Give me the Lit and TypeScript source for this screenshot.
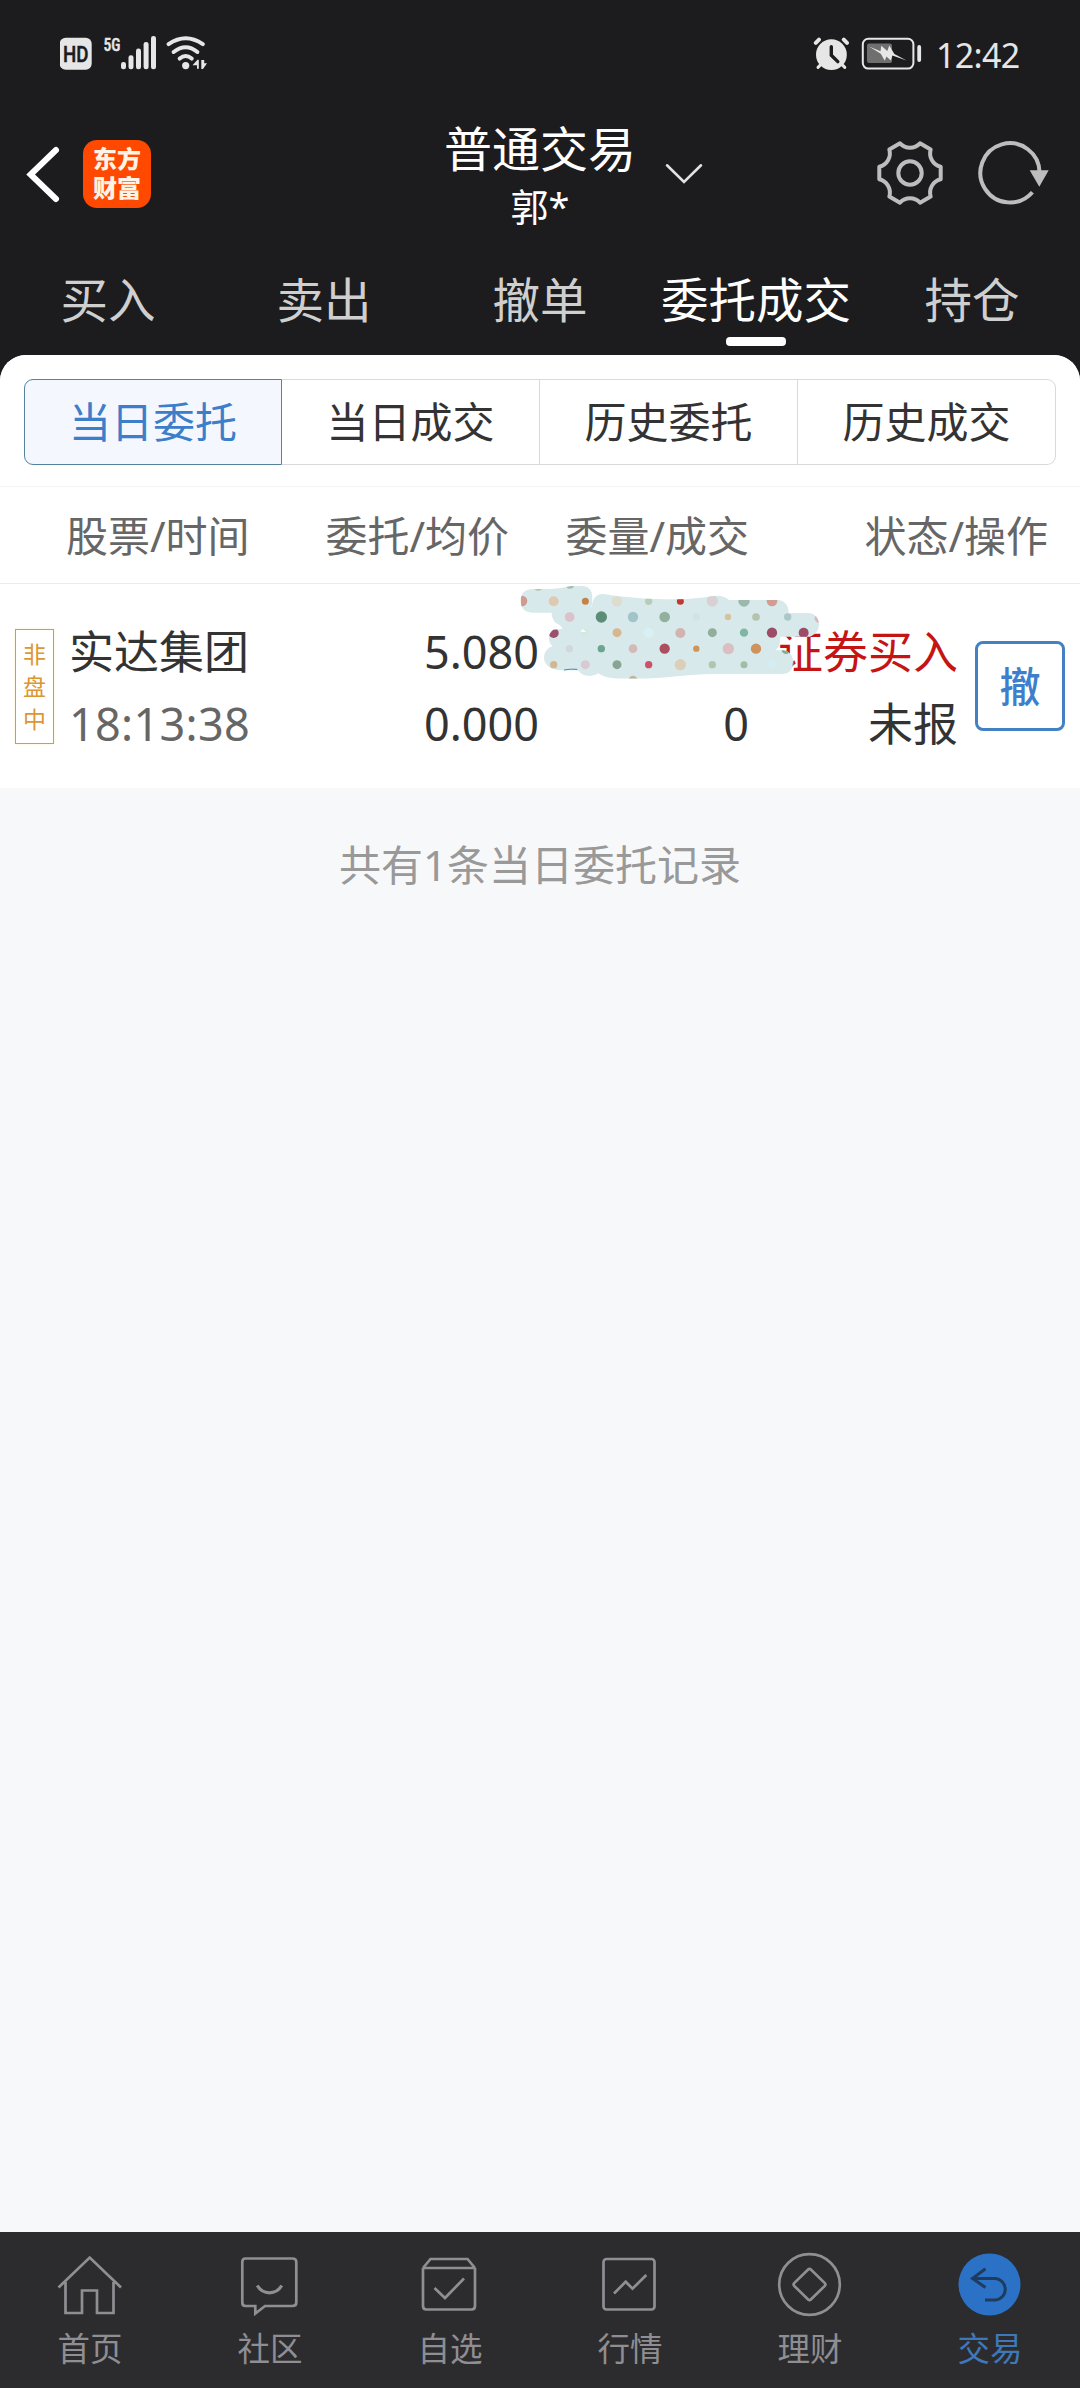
import { LitElement, html, css, svg } from "lit";
import { customElement, state } from "lit/decorators.js";
import { classMap } from "lit/directives/class-map.js";

const FONT = css`"Noto Sans", "Noto Sans CJK SC", sans-serif`;

@customElement("status-bar")
class StatusBar extends LitElement {
  static styles = css`
    :host { display: flex; height: 108px; align-items: center; justify-content: space-between; padding: 0 60px; box-sizing: border-box; color: #e6e6e6; font-family: ${FONT}; }
    svg { display: block; }
    .right { display: flex; align-items: center; }
    .time { font-size: 34px; line-height: 40px; margin-left: 13px; width: 84px; padding-top: 1px; white-space: nowrap; letter-spacing: -0.7px; }
    .hd { font: 500 22px Roboto, sans-serif; fill: #1c1c1e; }
    .net { font: 500 19px "Roboto Condensed", Roboto, sans-serif; fill: #e6e6e6; }
  `;
  render() {
    return html`
      <svg width="150" height="40" viewBox="60 34 150 40" fill="#e6e6e6">
        <rect x="59.7" y="37.7" width="32" height="32" rx="6" />
        <text class="hd" x="63" y="61.5" textLength="25.5" lengthAdjust="spacingAndGlyphs" stroke="#1c1c1e" stroke-width=".5">HD</text>
        <text class="net" x="103.5" y="50.8" textLength="17" lengthAdjust="spacingAndGlyphs" stroke="#e6e6e6" stroke-width=".4">5G</text>
        ${[[121, 62], [128.5, 55.3], [136, 48.6], [143.6, 42], [151, 36]].map(
          ([x, y]) => svg`<rect x=${x} y=${y} width="5" height=${69.2 - y} rx="2.3" />`
        )}
        <g fill="none" stroke="#e6e6e6" stroke-width="4" stroke-linecap="round">
          <path d="M168.6 44.2Q185.7 32.3 202.8 44.2" />
          <path d="M173.6 52Q185.7 42.5 197.4 52" />
          <path d="M179.7 58.6Q185.7 53.4 191.7 58.6" />
        </g>
        <circle cx="185.7" cy="65.6" r="3.6" />
        <path d="M192.5 65.3L197.5 59.8H198.8V68.8H197V65.3Z M201.3 60V69H203L207 63.2H204.2V60Z" />
      </svg>
      <div class="right">
        <svg width="110" height="40" viewBox="814 34 110 40" fill="#e6e6e6">
          <g stroke="#e6e6e6" stroke-width="4" stroke-linecap="round">
            <path d="M816.8 42.8L820 39.6M848 42.8L844.8 39.6" />
            <path d="M819 67.4L823 63.4M845.8 67.4L841.8 63.4" stroke-width="3" />
          </g>
          <circle cx="832.4" cy="54.7" r="15.4" />
          <path d="M832.3 46.8V55.2L838.8 61.6" fill="none" stroke="#1c1c1e" stroke-width="3.4" stroke-linecap="round" />
          <rect x="863.8" y="38.8" width="50.6" height="29.8" rx="5.5" fill="none" stroke="#e6e6e6" stroke-width="2" />
          <rect x="868" y="43.5" width="25" height="19.5" rx="2" fill="#6f6f70" />
          <rect x="918.3" y="45" width="3.8" height="17" rx="1.9" />
          <path d="M870 46.4L881.5 51.3L882.3 45.8L888.3 51L890.3 45.4L895.4 54L907.5 60.6L893.4 55.4L891.8 60.4L887.4 56.6L885.8 60.8L881.8 53.8Z" />
        </svg>
        <div class="time">12:42</div>
      </div>
    `;
  }
}

@customElement("title-bar")
class TitleBar extends LitElement {
  static styles = css`
    :host { display: grid; grid-template-columns: 1fr auto 1fr; height: 132px; color: #fff; font-family: ${FONT}; }
    svg { display: block; }
    .left { display: flex; align-items: center; padding-left: 24px; gap: 19px; }
    .logo { width: 68px; height: 68px; border-radius: 14px; background: #ff4800; display: flex; flex-direction: column; align-items: center; justify-content: center; font: 900 24px/29px "Liberation Sans", "Noto Sans CJK SC", sans-serif; box-sizing: border-box; color: #fff3e6; }
    .title { display: flex; flex-direction: column; align-items: center; padding-top: 10px; }
    .name { font-size: 48px; line-height: 61px; height: 61px; }
    .user { font-size: 38px; line-height: 54px; height: 54px; }
    .rest { display: flex; align-items: center; justify-content: space-between; padding-left: 28px; padding-right: 29px; }
    .icons { display: flex; gap: 33px; align-items: center; }
  `;
  render() {
    return html`
      <div class="left">
        <svg width="40" height="60" viewBox="24 143 40 60"><path d="M56 149L30.6 173.5L56 198" fill="none" stroke="#fff" stroke-width="6" stroke-linecap="round" /></svg>
        <div class="logo"><span>东方</span><span>财富</span></div>
      </div>
      <div class="title"><div class="name">普通交易</div><div class="user">郭*</div></div>
      <div class="rest">
        <svg width="40" height="24" viewBox="664 161 40 24"><path d="M667 164.3L684 181L701 164.3" fill="none" stroke="#e2e2e2" stroke-width="2.6" stroke-linecap="round" /></svg>
        <div class="icons">
          <svg width="68" height="68" viewBox="-34 -33 68 68" fill="none" stroke="#bdbdbd" stroke-width="4" stroke-linejoin="round">
            <path d="M30.7 -6.2V6.2A13.7 13.7 0 0 0 20.7 23.5L10 29.7A13.7 13.7 0 0 0 -10 29.7L-20.7 23.5A13.7 13.7 0 0 0 -30.7 6.2V-6.2A13.7 13.7 0 0 0 -20.7 -23.5L-10 -29.7A13.7 13.7 0 0 0 10 -29.7L20.7 -23.5A13.7 13.7 0 0 0 30.7 -6.2Z" />
            <circle r="11.7" />
          </svg>
          <svg width="74" height="68" viewBox="-33 -33 74 68">
            <path d="M22.4 19.2A29.6 29.6 0 1 1 29.6 0" fill="none" stroke="#bdbdbd" stroke-width="4" />
            <path d="M19.7 -2.7H38.7L29.3 13.7Z" fill="#bdbdbd" />
          </svg>
        </div>
      </div>
    `;
  }
}

const DOTS: [number, number, number, string][] = [
  [66, 123, 16, "#cf9a90"], [161, 124, 15, "#dfc9b0"], [256, 124, 10.5, "#c58247"], [351, 124, 16, "#dcdccf"],
  [446, 124, 11, "#b8cdb8"], [541, 124, 10.5, "#c4362f"], [637, 123, 17, "#d8d0d3"], [732, 123, 17, "#9cb8aa"],
  [816, 123, 16, "#d29c92"], [115, 80, 12, "#b5c5a5"], [210, 74, 12, "#a3bfa5"], [209, 171, 14.5, "#dcc0ca"], [304, 171, 17, "#5c8d76"],
  [399, 171, 15.5, "#a0c4c8"], [494, 171, 16, "#92b09c"], [589, 171, 11, "#d1e4e2"], [684, 171, 9.5, "#d6c29e"],
  [768, 171, 11.5, "#b4c3ab"], [863, 171, 11, "#aac8c5"], [957, 175, 13, "#dcb5c0"], [161, 219, 15, "#9c5069"],
  [256, 219, 13, "#d6e8e3"], [351, 218, 13.5, "#d6b78e"], [446, 219, 15, "#d8f0f4"], [541, 219, 15, "#d3b3b1"],
  [637, 218, 13.5, "#8fae9b"], [732, 218, 12.5, "#7fb5a5"], [816, 218, 15.5, "#9c4c67"], [911, 218, 15, "#9c4c67"],
  [208, 266, 11, "#d0d8da"], [304, 266, 11, "#6ba48f"], [399, 266, 13, "#d4b9b6"], [494, 266, 15.5, "#ab4f60"],
  [589, 266, 9.5, "#cc955a"], [685, 266, 17, "#dabec1"], [768, 266, 15.5, "#cf925a"], [858, 269, 13, "#86a99a"],
  [161, 314, 11, "#d1b890"], [256, 314, 13.5, "#d9c9d2"], [351, 314, 13.5, "#88a594"], [446, 314, 11, "#cf5068"],
  [541, 314, 17, "#dccfba"], [637, 314, 11, "#b0c6ae"], [732, 314, 10.5, "#a0bda9"], [816, 312, 12, "#d3eef2"],
  [885, 314, 9, "#a6c3b2"], [399, 360, 13, "#c3b69a"],
];

@customElement("order-row")
class OrderRow extends LitElement {
  static styles = css`
    :host { display: grid; position: relative; grid-template-columns: 39px 216px 269px 210px 209px 106px; padding: 0 15px; height: 204px; box-sizing: border-box; background: #fff; font-family: ${FONT}; font-size: 45px; line-height: 72px; color: #333; white-space: nowrap; }
    .tag { margin-top: 45px; height: 115px; box-sizing: border-box; border: 1px solid #c0a060; color: #dc9633; display: flex; flex-direction: column; align-items: center; justify-content: center; font-size: 23px; line-height: 32.5px; box-shadow: 0 0 2px #fdf0bd; }
    .cell { display: flex; flex-direction: column; padding-top: 32px; text-align: right; }
    .name { text-align: left; padding-left: 15px; }
    .time { color: #666; letter-spacing: 0.3px; }
    .buy { color: #c41414; }
    .cancel { margin: 57px 0 0 17px; width: 90px; height: 90px; box-sizing: border-box; border: 3px solid #4381c4; border-radius: 8px; color: #3d7fcd; display: flex; align-items: center; justify-content: center; font-size: 41px; line-height: 50px; font-weight: 500; }
    .mask { position: absolute; left: 500px; top: -24px; width: 340px; height: 120px; }
  `;
  render() {
    return html`
      <div class="tag"><span>非</span><span>盘</span><span>中</span></div>
      <div class="cell name"><span>实达集团</span><span class="time">18:13:38</span></div>
      <div class="cell"><span>5.080</span><span>0.000</span></div>
      <div class="cell"><span>&nbsp;</span><span>0</span></div>
      <div class="cell"><span class="buy">证券买入</span><span>未报</span></div>
      <div><div class="cancel">撤</div></div>
      <svg class="mask" viewBox="0 0 1020 360">
        <defs>
          <clipPath id="blob">
            <path d="M62 123C62 100 75 87 100 87C150 88 175 86 215 78H250C268 80 278 94 277 112L275 140H268L276 141C276 115 290 101 310 102C350 108 420 117 500 118C560 118 600 115 640 108C665 106 677 112 687 120H835C855 122 866 137 866 159H925C945 160 957 175 957 193C957 212 945 225 930 230H841C841 250 838 262 825 271H850C868 273 880 288 880 307C880 327 868 341 850 342H640C560 343 520 352 440 356H360C325 356 305 348 295 340C270 354 245 347 236 332C210 329 190 332 172 330C145 325 132 310 132 293C132 275 145 262 158 259C142 245 143 220 160 209L187 207C186 200 180 197 175 193C160 185 155 172 155 158H100C75 158 62 145 62 123Z" />
          </clipPath>
        </defs>
        <g clip-path="url(#blob)">
          <rect width="1020" height="360" fill="#d8e9eb" />
          ${DOTS.map(([x, y, r, c]) => svg`<circle cx=${x} cy=${y} r=${r} fill=${c} />`)}
          <path d="M241 215L249 207L258 216Z" fill="#fff" />
        </g>
        <path d="M192 330Q212 326 232 328" stroke="#3e83c8" stroke-width="3" fill="none" />
      </svg>
    `;
  }
}

const NAV = [
  { label: "首页", icon: svg`<path d="M58.5 2287.5L89.7 2257.5L121 2287.5M65.5 2282V2313H82V2290.5H97V2313H113.5V2282" />`, cx: 90 },
  { label: "社区", icon: svg`<path d="M245.5 2258.5H292.5Q296.3 2258.5 296.3 2262V2302.5Q296.3 2306 292.5 2306H265L255.3 2313.6V2306H245.5Q242.3 2306 242.3 2302.5V2262Q242.3 2258.5 245.5 2258.5Z" /><path d="M257.3 2285.5Q261.5 2292.8 269.5 2292.8T281.7 2285.5" stroke-width="3.2" />`, cx: 270 },
  { label: "自选", icon: svg`<path d="M423 2268V2306Q423 2309.5 426.5 2309.5H471.5Q475 2309.5 475 2306V2268M423 2268H475M423 2268L430.5 2259H467.5L475 2268M434.5 2288L445 2298L464 2278.5" />`, cx: 450 },
  { label: "行情", icon: svg`<rect x="603.5" y="2259" width="51" height="50.5" rx="3" /><path d="M614 2293.5L625.7 2281.7L632.5 2288.7L646.3 2275" />`, cx: 630 },
  { label: "理财", icon: svg`<circle cx="809.5" cy="2284.5" r="30.3" /><path d="M807.9 2269.7Q809.5 2268.2 811.1 2269.7L824.6 2282.9Q826.2 2284.5 824.6 2286.1L811.1 2299.3Q809.5 2300.8 807.9 2299.3L794.4 2286.1Q792.8 2284.5 794.4 2282.9Z" />`, cx: 810 },
  { label: "交易", icon: svg`<circle cx="989.5" cy="2284.5" r="31" fill="#2b72c6" stroke="none" /><path d="M985.5 2268.8L972.5 2278.5L985.5 2287.5M972.5 2278.5H995.5A10.8 10.8 0 0 1 995.5 2300H985" stroke="#1f3c60" stroke-width="3" />`, cx: 990 },
];

@customElement("bottom-nav")
class BottomNav extends LitElement {
  static styles = css`
    :host { display: grid; grid-template-columns: repeat(6, 1fr); height: 156px; background: #2c2c2e; font-family: ${FONT}; }
    .item { display: flex; flex-direction: column; align-items: center; padding-top: 16px; color: #8e8e93; font-size: 32.5px; line-height: 40px; }
    .item span { margin-top: 9px; }
    .active { color: #3f78b8; }
    svg { display: block; fill: none; stroke: #8e8e93; stroke-width: 2.7; }
  `;
  render() {
    return NAV.map(
      (n, i) => html`<div class=${classMap({ item: true, active: i === 5 })}>
        <svg width="72" height="72" viewBox="${n.cx - 36} 2248 72 72">${n.icon}</svg>
        <span>${n.label}</span>
      </div>`
    );
  }
}

@customElement("app-root")
class AppRoot extends LitElement {
  @state() private tab = 3;
  @state() private segment = 0;

  static styles = css`
    :host { display: flex; flex-direction: column; width: 1080px; height: 2388px; background: #1c1c1e; font-family: ${FONT}; overflow: hidden; }
    .tabs { display: grid; grid-template-columns: repeat(5, 1fr); height: 115px; color: #cfcfcf; font-size: 47.5px; line-height: 60px; }
    .tab { display: flex; flex-direction: column; align-items: center; padding-top: 29.5px; white-space: nowrap; box-sizing: border-box; }
    .tab.on { color: #fff; }
    .tab.on::after { content: ""; width: 60px; height: 9px; border-radius: 4px; background: #fff; margin-top: 7.5px; }
    .sheet { flex: 1; background: #f7f8fa; border-radius: 26px 26px 0 0; overflow: hidden; display: flex; flex-direction: column; }
    .segwrap { background: #fff; padding: 24px 24px 23px; border-bottom: 1px solid #f3f4f5; }
    .segs { display: grid; grid-template-columns: repeat(4, 1fr); height: 84px; font-size: 42px; line-height: 84px; color: #333; }
    .seg { box-sizing: border-box; border: 1px solid #d8d9da; border-left-width: 0; text-align: center; line-height: 84px; }
    .seg:first-child { border-radius: 9px 0 0 9px; }
    .seg:last-child { border-radius: 0 9px 9px 0; }
    .seg.on { border: 1px solid #55829d; background: #f4f8fe; color: #3d7ecb; }
    .heads { display: grid; grid-template-columns: 184px 259px 240px 299px; padding-left: 66px; height: 97px; box-sizing: border-box; border-bottom: 1px solid #ebecec; background: #fff; font-size: 42px; line-height: 98px; color: #666; text-align: right; white-space: nowrap; }
    .heads :first-child { text-align: left; }
    .empty { padding-top: 46px; text-align: center; font-size: 42px; line-height: 62px; color: #999; }
  `;
  render() {
    return html`
      <status-bar></status-bar>
      <title-bar></title-bar>
      <div class="tabs">
        ${["买入", "卖出", "撤单", "委托成交", "持仓"].map(
          (t, i) => html`<div class=${classMap({ tab: true, on: i === this.tab })} @click=${() => (this.tab = i)}>${t}</div>`
        )}
      </div>
      <div class="sheet">
        <div class="segwrap">
          <div class="segs">
            ${["当日委托", "当日成交", "历史委托", "历史成交"].map(
              (t, i) => html`<div class=${classMap({ seg: true, on: i === this.segment })} @click=${() => (this.segment = i)}>${t}</div>`
            )}
          </div>
        </div>
        <div class="heads"><span>股票/时间</span><span>委托/均价</span><span>委量/成交</span><span>状态/操作</span></div>
        <order-row></order-row>
        <div class="empty">共有1条当日委托记录</div>
      </div>
      <bottom-nav></bottom-nav>
    `;
  }
}
